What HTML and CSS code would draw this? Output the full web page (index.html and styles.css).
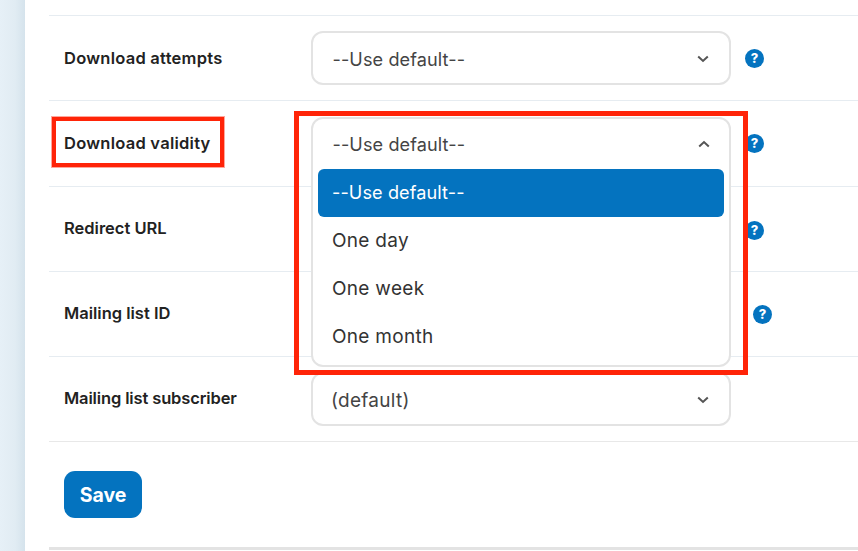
FILE: index.html
```html
<!DOCTYPE html>
<html lang="en">
<head>
    <meta charset="UTF-8">
    <meta name="viewport" content="width=device-width, initial-scale=1.0">
    <title>Download settings</title>
    <link rel="stylesheet" href="styles.css">
</head>
<body>
    <div class="page">
        <aside class="side"></aside>
        <main class="content">
            <form class="settings">
                <div class="row">
                    <label class="row-label row-label-wide">Download attempts</label>
                    <div class="control">
                        <div class="select">
                            <span class="placeholder placeholder-in">--Use default--</span>
                            <svg class="chevron" viewBox="0 0 12 8"><path d="M1.2 1.5 6 6l4.800-4.500"/></svg>
                        </div>
                    </div>
                    <span class="help">?</span>
                </div>

                <div class="row">
                    <label class="row-label row-label-wide">Download validity</label>
                    <div class="control">
                        <div class="select select-open">
                            <div class="select-head">
                                <span class="placeholder placeholder-in">--Use default--</span>
                                <svg class="chevron" viewBox="0 0 12 8"><path d="M1.2 6.500 6 2l4.800 4.500"/></svg>
                            </div>
                            <ul class="options">
                                <li class="option option-active"><span class="placeholder">--Use default--</span></li>
                                <li class="option">One day</li>
                                <li class="option">One week</li>
                                <li class="option">One month</li>
                            </ul>
                        </div>
                    </div>
                    <span class="help">?</span>
                </div>

                <div class="row">
                    <label class="row-label row-label-nudge">Redirect URL</label>
                    <div class="control">
                        <div class="select"></div>
                    </div>
                    <span class="help help-low">?</span>
                </div>

                <div class="row">
                    <label class="row-label row-label-nudge">Mailing list ID</label>
                    <div class="control control-wide"></div>
                    <span class="help help-lower">?</span>
                </div>

                <div class="row">
                    <label class="row-label row-label-up">Mailing list subscriber</label>
                    <div class="control">
                        <div class="select">
                            <span>(default)</span>
                            <svg class="chevron" viewBox="0 0 12 8"><path d="M1.2 1.500 6 6l4.800-4.500"/></svg>
                        </div>
                    </div>
                </div>

                <div class="actions">
                    <button type="button" class="btn">Save</button>
                </div>
            </form>
        </main>
    </div>

    <div class="mark mark-label"></div>
    <div class="mark mark-select"></div>
</body>
</html>
```

FILE: styles.css
```css
* {
    margin: 0;
    padding: 0;
    box-sizing: border-box;
}

html, body {
    height: 551px;
    overflow: hidden;
}

body {
    font-family: Inter, "Open Sans", sans-serif;
    background: #fff;
    color: #222;
    position: relative;
}

.page {
    display: flex;
    height: 551px;
}

.side {
    width: 25px;
    background: linear-gradient(90deg, #e6f0f7 0%, #e1ecf3 60%, #d5e3ec 100%);
}

.content {
    flex: 1;
    padding: 15px 0 0 24px;
}

.settings {
    border-bottom: 3px solid #e3e3e3;
    height: 535px;
}

.row {
    display: flex;
    align-items: center;
    height: 85.25px;
    padding-left: 15px;
    border-top: 1px solid #e6ecf1;
}

.row-label {
    width: 247px;
    flex: none;
    font-size: 16.5px;
    font-weight: 600;
    color: #222;
}

.row-label-wide {
    letter-spacing: 0.25px;
}

.row-label-nudge {
    margin-bottom: 2px;
}

.row-label-up {
    margin-bottom: 3px;
    letter-spacing: -0.13px;
}

.control {
    width: 420px;
    flex: none;
    position: relative;
    height: 54px;
}

.control-wide {
    width: 428px;
}

.select {
    display: flex;
    align-items: center;
    justify-content: space-between;
    height: 54px;
    padding: 2px 20px 0 18px;
    border: 2px solid #e3e3e3;
    border-radius: 12px;
    background: #fff;
    font-size: 19px;
    letter-spacing: 0.3px;
    color: #444;
}

.placeholder {
    font-size: 18.1px;
    letter-spacing: 0.1px;
}

.placeholder-in {
    margin-left: 1.5px;
}

/* open list lies over the rows below */
.select-open {
    display: block;
    position: absolute;
    top: 1px;
    left: 0;
    right: 0;
    height: 250px;
    padding: 0;
    z-index: 2;
}

.select-head {
    display: flex;
    align-items: center;
    justify-content: space-between;
    height: 50px;
    padding: 0 19px 1px 18px;
}

.chevron {
    width: 12px;
    height: 8px;
    fill: none;
    stroke: #555;
    stroke-width: 2;
}

.options {
    list-style: none;
    padding: 0 5px;
}

.option {
    display: flex;
    align-items: center;
    height: 48px;
    padding: 0 0 2px 14px;
    border-radius: 6px;
    color: #333;
}

.option-active {
    background: #0473bf;
    color: #fff;
}

.help {
    width: 19px;
    height: 19px;
    margin-left: 14px;
    flex: none;
    border-radius: 50%;
    background: #0473bf;
    color: #fff;
    font-size: 13px;
    font-weight: 800;
    line-height: 19px;
    text-align: center;
}

.help-low {
    margin-top: 4px;
}

.help-lower {
    margin-top: 2px;
}

.actions {
    border-top: 1px solid #e8e8e8;
    padding: 29px 15px 0;
}

.btn {
    width: 78px;
    height: 47px;
    border: none;
    border-radius: 11px;
    background: #0473bf;
    color: #fff;
    font-family: inherit;
    font-size: 19.5px;
    font-weight: 700;
}

.mark {
    position: absolute;
    border: 5px solid #ff2408;
    z-index: 3;
}

.mark-label {
    left: 52px;
    top: 117px;
    width: 172px;
    height: 50px;
    border-width: 4px;
    box-shadow: 0 0 0 1px rgba(255, 36, 8, 0.4);
}

.mark-select {
    left: 294px;
    top: 111px;
    width: 454px;
    height: 264px;
}
```
